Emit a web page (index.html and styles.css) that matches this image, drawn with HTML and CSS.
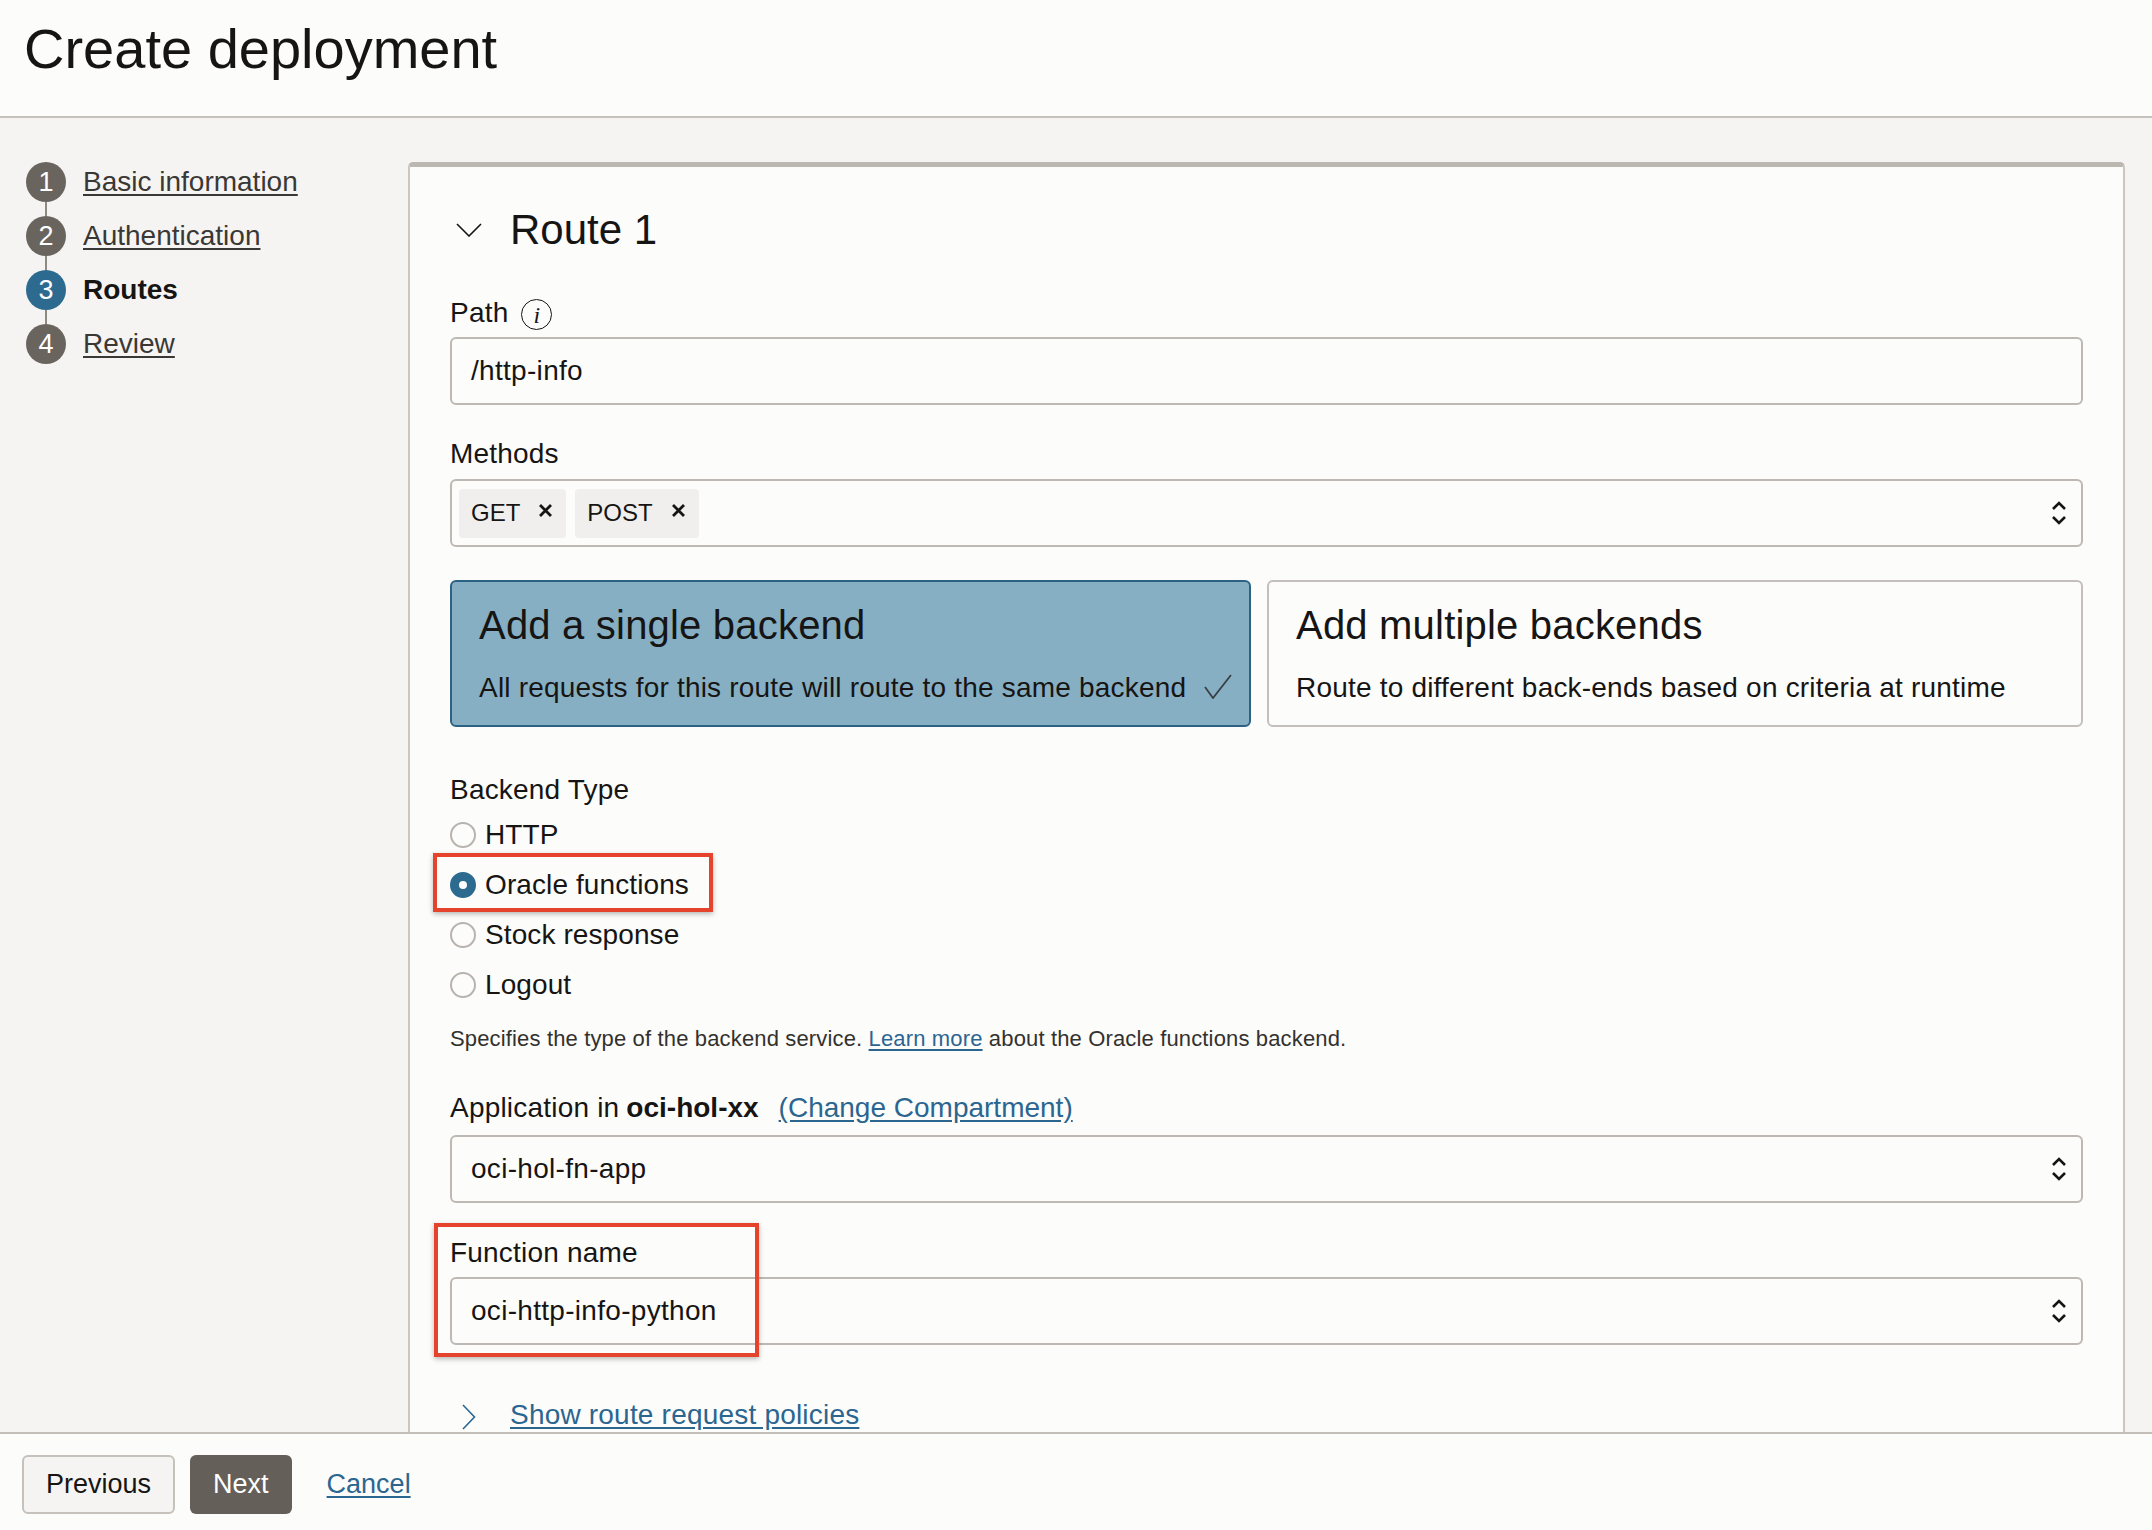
FILE: index.html
```html
<!DOCTYPE html>
<html lang="en">
<head>
<meta charset="utf-8">
<title>Create deployment</title>
<link rel="stylesheet" href="styles.css">
</head>
<body>
<header class="page-header">
  <h1 class="page-title">Create deployment</h1>
</header>

<div class="workspace">
  <nav class="steps">
    <ol class="step-list">
      <li class="step">
        <span class="step-num">1</span>
        <a class="step-link" href="#">Basic information</a>
        <span class="step-line"></span>
      </li>
      <li class="step">
        <span class="step-num">2</span>
        <a class="step-link" href="#">Authentication</a>
        <span class="step-line"></span>
      </li>
      <li class="step step-current">
        <span class="step-num">3</span>
        <span class="step-link">Routes</span>
        <span class="step-line"></span>
      </li>
      <li class="step">
        <span class="step-num">4</span>
        <a class="step-link" href="#">Review</a>
      </li>
    </ol>
  </nav>

  <section class="panel">
    <div class="route-head">
      <svg class="chev-down" width="26" height="14" viewBox="0 0 26 14"><polyline points="1,1 13,13 25,1" fill="none" stroke="#161513" stroke-width="1.6"/></svg>
      <h2 class="route-title">Route 1</h2>
    </div>

    <div class="field field-path">
      <div class="field-label">Path <span class="info-icon"><span class="info-i">i</span></span></div>
      <div class="input">/http-info</div>
    </div>

    <div class="field field-methods">
      <div class="field-label">Methods</div>
      <div class="input select">
        <div class="chips">
          <span class="chip">GET <svg class="chip-x" width="13" height="13" viewBox="0 0 13 13"><path d="M2 2 L11 11 M11 2 L2 11" stroke="#161513" stroke-width="2.8" stroke-linecap="square"/></svg></span>
          <span class="chip">POST <svg class="chip-x" width="13" height="13" viewBox="0 0 13 13"><path d="M2 2 L11 11 M11 2 L2 11" stroke="#161513" stroke-width="2.8" stroke-linecap="square"/></svg></span>
        </div>
        <svg class="updown" width="16" height="28" viewBox="0 0 16 28"><polyline points="2,10 8,4 14,10" fill="none" stroke="#161513" stroke-width="2.6"/><polyline points="2,18 8,24 14,18" fill="none" stroke="#161513" stroke-width="2.6"/></svg>
      </div>
    </div>

    <div class="backend-cards">
      <div class="card card-selected">
        <div class="card-title">Add a single backend</div>
        <div class="card-sub">
          <span>All requests for this route will route to the same backend</span>
          <svg class="card-check" width="28" height="25" viewBox="0 0 28 25"><polyline points="1,13 9,24 27,1" fill="none" stroke="#3a3f44" stroke-width="1.8"/></svg>
        </div>
      </div>
      <div class="card">
        <div class="card-title">Add multiple backends</div>
        <div class="card-sub"><span>Route to different back-ends based on criteria at runtime</span></div>
      </div>
    </div>

    <div class="field field-backend">
      <div class="field-label">Backend Type</div>
      <div class="radios">
        <div class="radio-row"><span class="radio"></span><span>HTTP</span></div>
        <div class="radio-row radio-marked"><span class="radio radio-on"></span><span>Oracle functions</span><span class="callout callout-radio"></span></div>
        <div class="radio-row"><span class="radio"></span><span>Stock response</span></div>
        <div class="radio-row"><span class="radio"></span><span>Logout</span></div>
      </div>
      <p class="help">Specifies the type of the backend service. <a class="link" href="#">Learn more</a> about the Oracle functions backend.</p>
    </div>

    <div class="field field-app">
      <div class="field-label">Application in <b>oci-hol-xx</b> <a class="link change-link" href="#">(Change Compartment)</a></div>
      <div class="input select">
        <span class="select-value">oci-hol-fn-app</span>
        <svg class="updown" width="16" height="28" viewBox="0 0 16 28"><polyline points="2,10 8,4 14,10" fill="none" stroke="#161513" stroke-width="2.6"/><polyline points="2,18 8,24 14,18" fill="none" stroke="#161513" stroke-width="2.6"/></svg>
      </div>
    </div>

    <div class="field field-fn">
      <div class="field-label">Function name</div>
      <div class="input select">
        <span class="select-value">oci-http-info-python</span>
        <svg class="updown" width="16" height="28" viewBox="0 0 16 28"><polyline points="2,10 8,4 14,10" fill="none" stroke="#161513" stroke-width="2.6"/><polyline points="2,18 8,24 14,18" fill="none" stroke="#161513" stroke-width="2.6"/></svg>
      </div>
      <span class="callout callout-fn"></span>
    </div>

    <div class="policies">
      <svg class="chev-right" width="14" height="26" viewBox="0 0 14 26"><polyline points="1,1 12.5,13 1,25" fill="none" stroke="#2b6690" stroke-width="1.6"/></svg>
      <a class="link" href="#">Show route request policies</a>
    </div>
  </section>
</div>

<footer class="page-footer">
  <button class="btn btn-prev" type="button">Previous</button>
  <button class="btn btn-next" type="button">Next</button>
  <a class="link cancel" href="#">Cancel</a>
</footer>
</body>
</html>
```

FILE: styles.css
```css
* { box-sizing: border-box; }

html, body {
  margin: 0;
  padding: 0;
  width: 2152px;
  height: 1530px;
  overflow: hidden;
  background: #f5f4f2;
  color: #161513;
  font-family: "Liberation Sans", Arial, sans-serif;
}

a { color: inherit; }

.link {
  color: #2b6690;
  text-decoration: underline;
  text-underline-offset: 3px;
}

/* Header */
.page-header {
  height: 118px;
  background: #fcfcfb;
  border-bottom: 2px solid #c6c1bb;
  padding: 17px 0 0 24px;
}
.page-title {
  margin: 0;
  font-size: 56px;
  line-height: 64px;
  font-weight: 400;
}

/* Workspace */
.workspace {
  display: flex;
  height: 1314px;
  overflow: hidden;
}

.steps {
  flex: none;
  width: 408px;
  padding: 44px 0 0 26px;
}
.step-list {
  list-style: none;
  margin: 0;
  padding: 0;
}
.step {
  display: grid;
  grid-template-columns: 40px auto;
  grid-template-rows: 40px 14px;
  column-gap: 17px;
  align-items: center;
}
.step:last-child { grid-template-rows: 40px; }
.step-num {
  width: 40px;
  height: 40px;
  border-radius: 50%;
  background: #6a645f;
  color: #fff;
  font-size: 27px;
  display: flex;
  align-items: center;
  justify-content: center;
}
.step-current .step-num { background: #2c6a8f; }
.step-link {
  font-size: 28px;
  line-height: 32px;
  color: #3a3835;
  text-decoration: underline;
  text-underline-offset: 3px;
}
.step-current .step-link {
  color: #161513;
  font-weight: 700;
  text-decoration: none;
}
.step-line {
  grid-column: 1;
  grid-row: 2;
  justify-self: center;
  width: 2px;
  height: 14px;
  background: #8f8984;
}

/* Panel */
.panel {
  flex: 1;
  margin: 44px 27px 0 0;
  background: #fcfcfb;
  border-top: 5px solid #bcb7b1;
  border-left: 2px solid #cbc6c0;
  border-right: 2px solid #cbc6c0;
  border-radius: 5px 5px 0 0;
  padding: 38px 40px 0 40px;
}

.route-head {
  display: flex;
  align-items: center;
  height: 50px;
}
.chev-down { margin-left: 6px; margin-right: 28px; }
.route-title {
  margin: 0;
  font-size: 42px;
  line-height: 50px;
  font-weight: 400;
}

.field { position: relative; }
.field-label {
  font-size: 28px;
  letter-spacing: 0.2px;
  line-height: 32px;
  height: 32px;
  display: flex;
  align-items: center;
}
.field-path { margin-top: 42px; }
.field-methods { margin-top: 33px; }
.field-backend { margin-top: 47px; }
.field-app { margin-top: 39px; }
.field-fn { margin-top: 34px; }

.info-icon {
  flex: none;
  margin-left: 13px;
  margin-top: 3px;
  width: 31px;
  height: 31px;
  border: 1.6px solid #161513;
  border-radius: 50%;
  display: inline-flex;
  align-items: center;
  justify-content: center;
}
.info-i {
  font-family: "Liberation Serif", "Times New Roman", serif;
  font-style: italic;
  font-size: 24px;
  line-height: 1;
}

.input {
  margin-top: 8px;
  height: 68px;
  border: 2px solid #bdb8b2;
  border-radius: 6px;
  background: #fcfcfb;
  font-size: 28px;
  letter-spacing: 0.3px;
  display: flex;
  align-items: center;
  padding: 0 14px 0 19px;
}
.field-methods .input { margin-top: 9px; padding-left: 7px; letter-spacing: 0; }
.field-app .input { margin-top: 11px; }

.select { justify-content: space-between; }
.select-value { white-space: nowrap; }
.updown { flex: none; }

.chips { display: flex; gap: 9px; }
.chip {
  height: 49px;
  background: #f1efed;
  border-radius: 4px;
  font-size: 24px;
  display: inline-flex;
  align-items: center;
  padding: 0 14px 0 12px;
}
.chip-x { margin-left: 19px; margin-top: -6px; }

/* Backend cards */
.backend-cards {
  margin-top: 33px;
  display: grid;
  grid-template-columns: 801px 816px;
  column-gap: 16px;
}
.card {
  height: 147px;
  border: 2px solid #c4bfba;
  border-radius: 6px;
  background: #fcfcfb;
  padding: 19px 17px 0 27px;
}
.card-selected {
  background: #86afc4;
  border-color: #2d6284;
}
.card-title {
  font-size: 40px;
  letter-spacing: 0.2px;
  line-height: 48px;
}
.card-sub {
  margin-top: 23px;
  font-size: 28px;
  letter-spacing: 0.2px;
  line-height: 32px;
  display: flex;
  align-items: center;
  justify-content: space-between;
  white-space: nowrap;
}
.card-check { flex: none; margin-top: -3px; }

/* Radios */
.radios { margin-top: 4px; }
.radio-row {
  position: relative;
  height: 50px;
  display: flex;
  align-items: center;
  font-size: 28px;
  letter-spacing: 0.1px;
  gap: 9px;
}
.radio {
  width: 26px;
  height: 26px;
  border: 2px solid #b8b3ad;
  border-radius: 50%;
  background: #fcfcfb;
  flex: none;
}
.radio-on {
  border: 9px solid #2c6a8f;
  background: #ffffff;
}

.callout {
  position: absolute;
  border: 4px solid #e5432b;
  box-shadow: 0 2px 5px rgba(0, 0, 0, 0.28);
  pointer-events: none;
}
.callout-radio {
  left: -17px;
  top: -7px;
  width: 280px;
  height: 59px;
}
.callout-fn {
  left: -16px;
  top: -14px;
  width: 325px;
  height: 134px;
}

.help {
  margin: 15px 0 0 0;
  font-size: 22px;
  letter-spacing: 0.15px;
  line-height: 28px;
  color: #33312e;
}

.change-link { margin-left: 20px; letter-spacing: 0; }
.field-label b { margin-left: 7px; font-weight: 700; letter-spacing: 0; }

/* Policies */
.policies {
  margin-top: 54px;
  display: flex;
  align-items: center;
  font-size: 28px;
  letter-spacing: 0.2px;
  line-height: 32px;
}
.chev-right { margin-left: 12px; margin-right: 34px; margin-top: 4px; }

/* Footer */
.page-footer {
  height: 98px;
  background: #fcfcfb;
  border-top: 2px solid #c3beb8;
  padding: 21px 0 0 22px;
  display: flex;
  align-items: flex-start;
}
.btn {
  height: 59px;
  font-family: "Liberation Sans", Arial, sans-serif;
  font-size: 27px;
  border-radius: 6px;
  padding: 0 22px;
  cursor: pointer;
}
.btn-prev {
  background: #f5f4f2;
  border: 2px solid #c6c1bb;
  color: #161513;
}
.btn-next {
  margin-left: 15px;
  background: #655f5a;
  border: none;
  color: #ffffff;
  padding: 0 23px;
}
.cancel {
  margin-left: 35px;
  font-size: 27px;
  line-height: 59px;
}
```
